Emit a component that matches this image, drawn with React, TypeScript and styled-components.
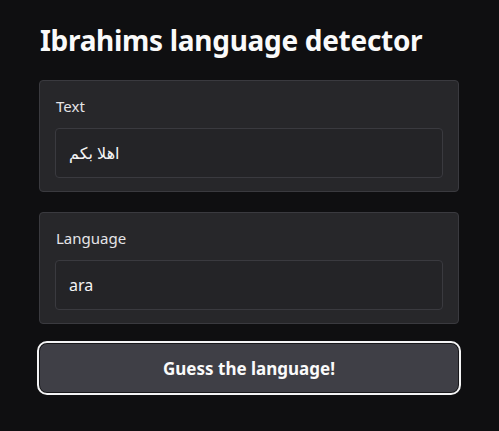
import styled, { createGlobalStyle } from "styled-components";

const GlobalStyle = createGlobalStyle`
  html, body {
    margin: 0;
    padding: 0;
    background: #0f0f11;
  }
  body {
    font-family: "Noto Sans", "DejaVu Sans", sans-serif;
    color: #f4f4f5;
  }
`;

export default function App() {
  return (
    <>
      <GlobalStyle />
      <Page>
        <Title>Ibrahims language detector</Title>
        <Panel>
          <Label>Text</Label>
          <Field dir="auto">اهلا بكم</Field>
        </Panel>
        <Panel>
          <Label>Language</Label>
          <Field>ara</Field>
        </Panel>
        <Button>Guess the language!</Button>
      </Page>
    </>
  );
}

const Page = styled.div`
  width: 420px;
  padding: 20px 39px 30px;
  display: flex;
  flex-direction: column;
  gap: 20px;
`;

const Title = styled.h1`
  margin: 0 0 0 1px;
  font-size: 28px;
  line-height: 40px;
  font-weight: 700;
  letter-spacing: -0.3px;
  color: #fafafa;
`;

const Panel = styled.div`
  box-sizing: border-box;
  display: flex;
  flex-direction: column;
  gap: 12px;
  padding: 15px 15px 13px;
  background: #27272a;
  border: 1px solid #3a3a3f;
  border-radius: 4px;
`;

const Label = styled.div`
  font-size: 15px;
  line-height: 20px;
  color: #e4e4e7;
  padding-left: 1px;
`;

const Field = styled.div`
  box-sizing: border-box;
  height: 50px;
  display: flex;
  align-items: center;
  justify-content: flex-start;
  padding: 0 13px;
  background: #242427;
  border: 1px solid #3a3a3f;
  border-radius: 4px;
  font-size: 16px;
  color: #f4f4f5;
  direction: ltr;
`;

const Button = styled.button`
  margin-top: -1px;
  height: 50px;
  background: #3f3f46;
  border: 1px solid #18181b;
  outline: 2px solid #f4f4f5;
  outline-offset: 0;
  border-radius: 8px;
  color: #fafafa;
  font-family: "Noto Sans", sans-serif;
  font-size: 17px;
  font-weight: 700;
  cursor: pointer;
`;
